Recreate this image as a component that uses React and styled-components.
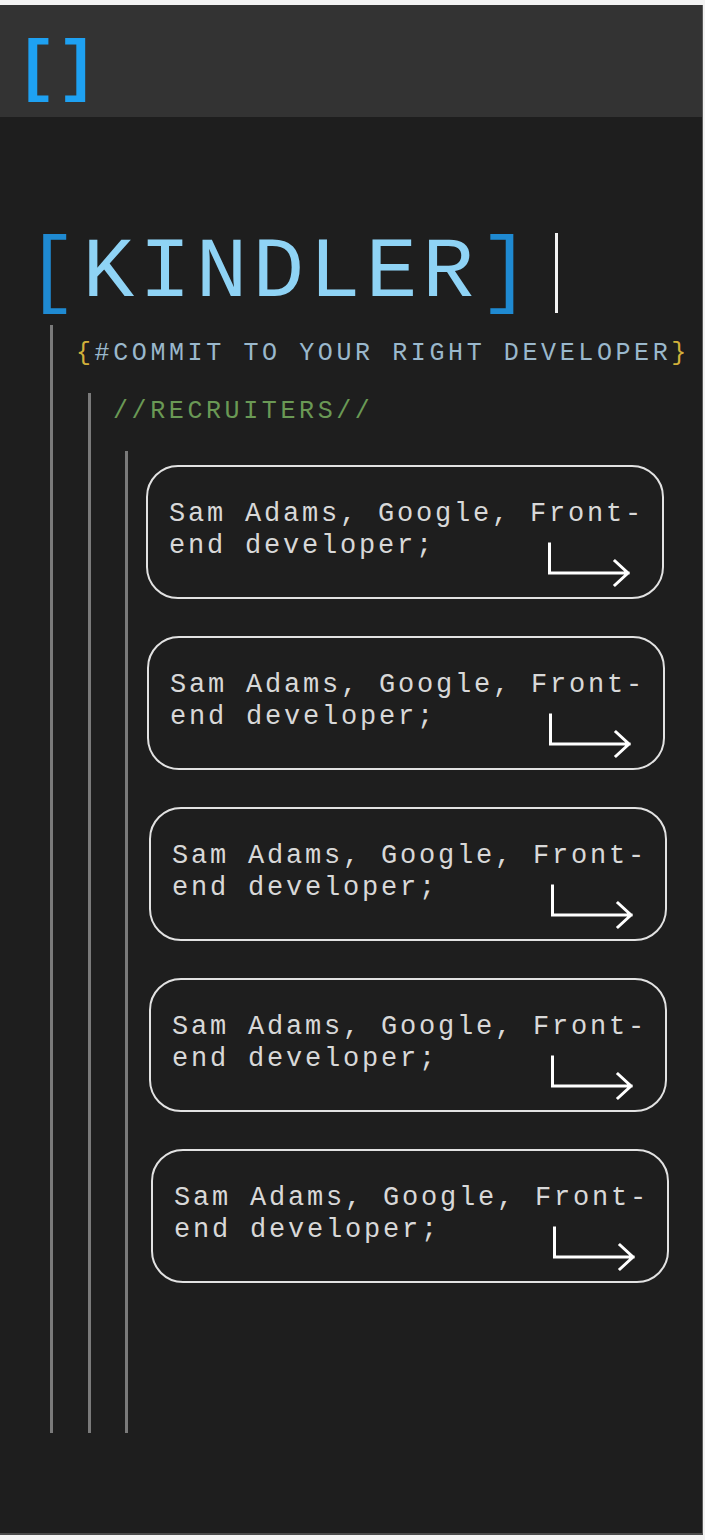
import styled, { createGlobalStyle } from "styled-components";

const GlobalStyle = createGlobalStyle`
  html, body {
    margin: 0;
    padding: 0;
    background: #f3f3f3;
  }
  body {
    padding-top: 5px;
    font-family: "Liberation Mono", "DejaVu Sans Mono", monospace;
  }
`;

/* Styling */
const Frame = styled.div`
  width: 702px;
  height: 1528px;
  background: #1e1e1e;
  border-right: 1px solid #5a5a5a;
  border-bottom: 2px solid #4a4a4a;
  display: flex;
  flex-direction: column;
`;

const Header = styled.header`
  height: 112px;
  background: #333333;
  display: flex;
  align-items: center;
  padding-left: 16px;
`;

const Logo = styled.span`
  color: #1ea1f2;
  font-family: "Liberation Mono", monospace;
  font-weight: 700;
  font-size: 68px;
  letter-spacing: 0px;
  line-height: 1;
  margin-top: 18px;
`;

const Main = styled.main`
  padding-top: 116px;
`;

const TitleRow = styled.div`
  display: flex;
  align-items: center;
  padding-left: 26px;
  height: 80px;
`;

const Title = styled.h1`
  margin: 0;
  font-family: "Liberation Mono", monospace;
  font-weight: 400;
  font-size: 86px;
  letter-spacing: 5px;
  line-height: 80px;
  color: #8fd3f5;
`;

const Bracket = styled.span`
  color: #1f8ad2;
`;

const Cursor = styled.span`
  width: 3px;
  height: 80px;
  background: #f2f2f2;
  margin-left: 20px;
`;

const Branch = styled.section`
  margin-left: ${(props) => props.$offset}px;
  margin-top: ${(props) => props.$top}px;
  border-left: 3px solid #7a7a7a;
  padding-bottom: ${(props) => props.$bottom || 0}px;
`;

const Label = styled.div`
  margin-left: ${(props) => props.$indent}px;
  padding-top: ${(props) => props.$pad}px;
  font-size: 25px;
  line-height: 30px;
  letter-spacing: 3.6px;
  color: ${(props) => props.$color};
`;

const Brace = styled.span`
  color: #d2b03a;
`;

const CardList = styled.div`
  display: flex;
  flex-direction: column;
  gap: 37px;
  padding-top: 14px;
`;

const Card = styled.article`
  position: relative;
  box-sizing: border-box;
  width: 518px;
  height: 134px;
  margin-left: ${(props) => props.$shift}px;
  border: 2px solid #e2e2e2;
  border-radius: 32px;
  padding: 31px 0 0 21px;
`;

const CardText = styled.p`
  margin: 0;
  font-size: 27px;
  line-height: 32px;
  letter-spacing: 2.8px;
  color: #d8d8d8;
`;

const ArrowBadge = styled.svg`
  position: absolute;
  right: 31px;
  bottom: 9px;
`;

const recruiters = [
  { name: "Sam Adams", company: "Google", role: "Front-", rest: "end developer;", shift: 18 },
  { name: "Sam Adams", company: "Google", role: "Front-", rest: "end developer;", shift: 19 },
  { name: "Sam Adams", company: "Google", role: "Front-", rest: "end developer;", shift: 21 },
  { name: "Sam Adams", company: "Google", role: "Front-", rest: "end developer;", shift: 21 },
  { name: "Sam Adams", company: "Google", role: "Front-", rest: "end developer;", shift: 23 },
];

function Arrow() {
  return (
    <ArrowBadge width="84" height="46" viewBox="0 0 84 46" fill="none">
      <path
        d="M2.5 2 V31 H81 M68 19 L81 31 L68 43"
        stroke="#ffffff"
        strokeWidth="3"
        strokeLinecap="square"
        strokeLinejoin="miter"
      />
    </ArrowBadge>
  );
}

export default function App() {
  return (
    <>
      <GlobalStyle />
      <Frame>
        <Header>
          <Logo>[]</Logo>
        </Header>

        <Main>
          <TitleRow>
            <Title>
              <Bracket>[</Bracket>KINDLER<Bracket>]</Bracket>
            </Title>
            <Cursor />
          </TitleRow>

          <Branch $offset={50} $top={12}>
            <Label $indent={23} $pad={14} $color="#9ab8cc">
              <Brace>{"{"}</Brace>#COMMIT TO YOUR RIGHT DEVELOPER<Brace>{"}"}</Brace>
            </Label>

            <Branch $offset={35} $top={24}>
              <Label $indent={22} $pad={4} $color="#6a9955">
                //RECRUITERS//
              </Label>

              <Branch $offset={34} $top={24} $bottom={150}>
                <CardList>
                  {recruiters.map((r, i) => (
                    <Card key={i} $shift={r.shift}>
                      <CardText>
                        {r.name}, {r.company}, {r.role}
                        <br />
                        {r.rest}
                      </CardText>
                      <Arrow />
                    </Card>
                  ))}
                </CardList>
              </Branch>
            </Branch>
          </Branch>
        </Main>
      </Frame>
    </>
  );
}
